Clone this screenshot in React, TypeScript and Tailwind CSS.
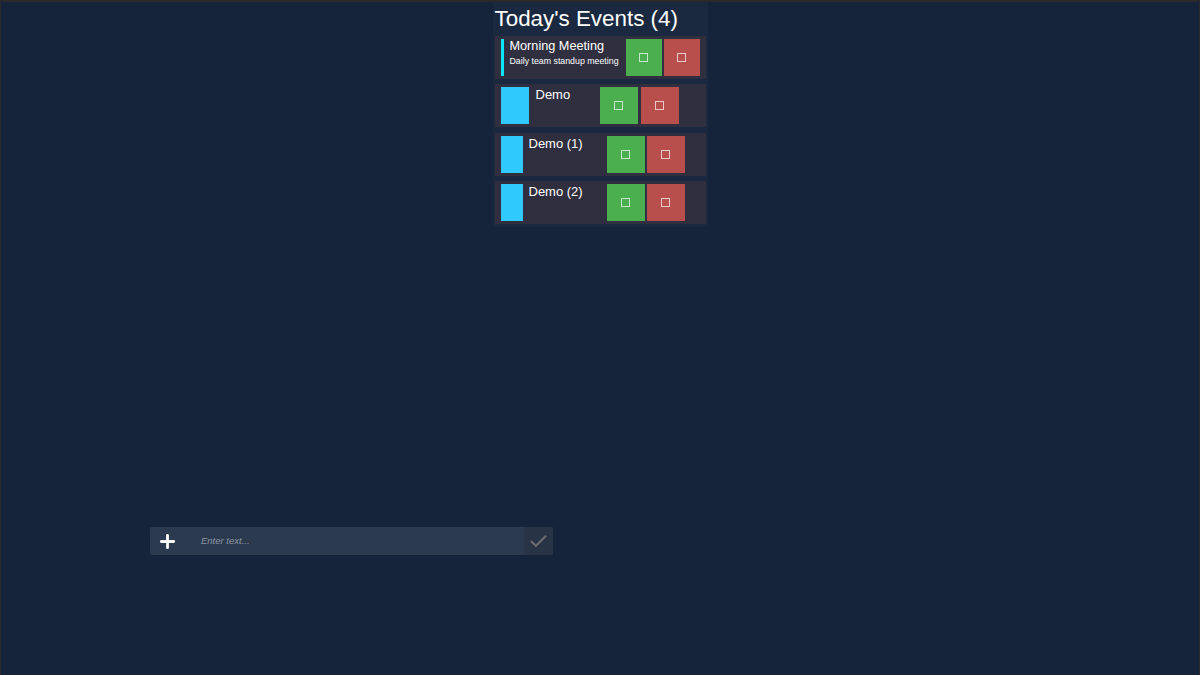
import { Plus, Check } from 'lucide-react';

type EventRow = {
  title: string;
  subtitle?: string;
  accent: 'bar' | 'wide' | 'narrow';
};

const events: EventRow[] = [
  { title: 'Morning Meeting', subtitle: 'Daily team standup meeting', accent: 'bar' },
  { title: 'Demo', accent: 'wide' },
  { title: 'Demo (1)', accent: 'narrow' },
  { title: 'Demo (2)', accent: 'narrow' },
];

export default function App() {
  return (
    <div
      className="h-[675px] w-[1200px] overflow-hidden bg-[#16243b] border-t-2 border-x border-[#2a2a2c] flex flex-col"
      style={{ fontFamily: '"Liberation Sans", Arial, sans-serif' }}
    >
      {/* Events panel */}
      <div className="mx-auto mt-px w-[215px] bg-[#1a2940] px-[2px] pb-[3px]">
        <h1 className="h-[33px] text-[22.4px] leading-[31px] text-white">Today's Events (4)</h1>
        <div className="flex flex-col gap-[5px]">
          {events.map((ev, i) => (
            <EventCard key={ev.title} event={ev} extraTop={i === 2} />
          ))}
        </div>
      </div>

      {/* Input bar */}
      <div className="mt-[300px] ml-[149px] flex h-[28px] w-[403px] items-center rounded-[2px] bg-[#2b3a4f]">
        <div className="flex w-[35px] justify-center">
          <Plus className="h-[21px] w-[21px] text-white" strokeWidth={3.2} />
        </div>
        <span className="ml-[16px] flex-1 text-[9.5px] italic text-[#8d96a3]">Enter text...</span>
        <div className="flex h-[28px] w-[29px] items-center justify-center rounded-r-[2px] bg-[#283446]">
          <Check className="h-[21px] w-[21px] text-[#6b6e72]" strokeWidth={2.4} />
        </div>
      </div>
    </div>
  );
}

function EventCard({ event, extraTop }: { event: EventRow; extraTop?: boolean }) {
  const { title, subtitle, accent } = event;

  if (accent === 'bar') {
    return (
      <div className="flex h-[43px] items-center bg-[#302f40] pl-[6px] pr-[6px]">
        <div className="h-[37px] w-[3px] bg-[#08e4f8]" />
        <div className="ml-[6px] flex-1 self-start pt-[2px]">
          <p className="text-[12.7px] leading-[16px] text-white">{title}</p>
          <p className="mt-[1px] text-[8.8px] leading-[12px] text-white">{subtitle}</p>
        </div>
        <ActionButtons size="w-[36px]" gap="gap-[2px]" />
      </div>
    );
  }

  const wide = accent === 'wide';
  return (
    <div className={`flex h-[43px] items-center bg-[#302f40] pl-[6px] ${extraTop ? 'mt-px' : ''}`}>
      <div className={`h-[37px] bg-[#2fc9fd] ${wide ? 'w-[28px]' : 'w-[22px]'}`} />
      <div className={`self-start pt-[3px] ${wide ? 'ml-[7px] w-[64px]' : 'ml-[6px] w-[78px]'}`}>
        <p className="text-[13px] leading-[16px] text-white">{title}</p>
      </div>
      <ActionButtons size="w-[38px]" gap={wide ? 'gap-[3px]' : 'gap-[2px]'} />
    </div>
  );
}

function ActionButtons({ size, gap }: { size: string; gap: string }) {
  return (
    <div className={`flex ${gap}`}>
      <button className={`flex h-[37px] ${size} items-center justify-center bg-[#4caf4f]`}>
        <span className="h-[9px] w-[9px] border border-white/70" />
      </button>
      <button className={`flex h-[37px] ${size} items-center justify-center bg-[#b94f4c]`}>
        <span className="h-[9px] w-[9px] border border-white/70" />
      </button>
    </div>
  );
}
